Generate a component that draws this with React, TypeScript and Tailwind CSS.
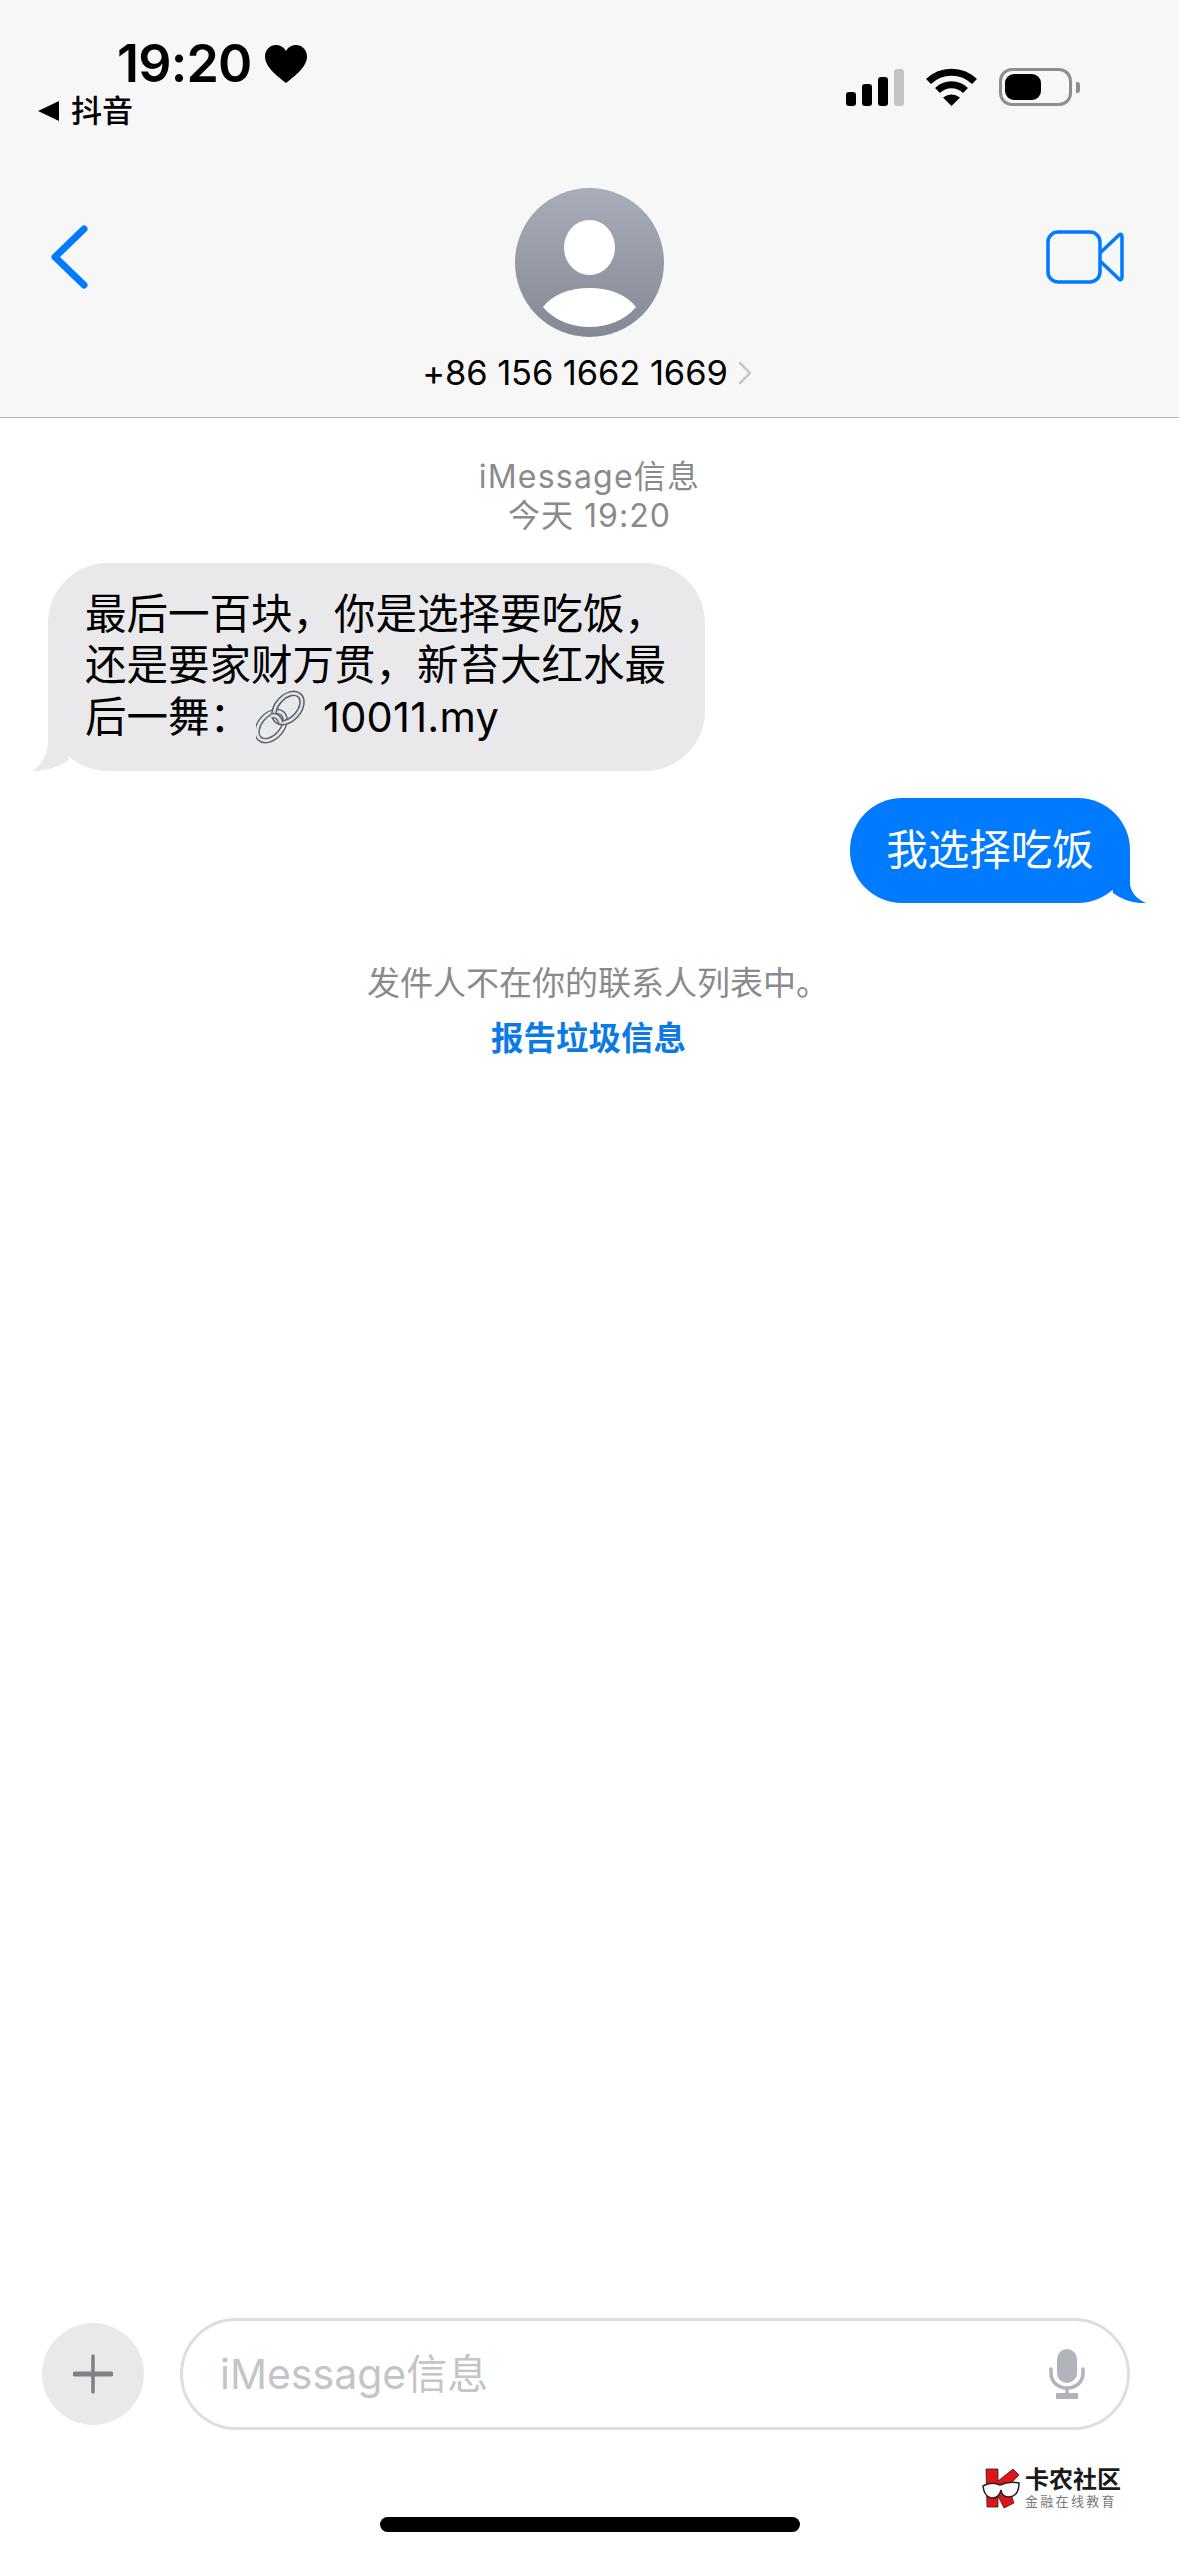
import React from "react";

function Heart() {
  return (
    <svg width="42" height="38" viewBox="0 0 42 38" className="shrink-0">
      <path d="M21 38C15 33 0 23 0 11.500C0 4.500 5.300 0 11 0C15.500 0 19 2.500 21 6C23 2.500 26.500 0 31 0C36.700 0 42 4.500 42 11.500C42 23 27 33 21 38Z" fill="#000" />
    </svg>
  );
}

function Wifi() {
  return (
    <svg width="51" height="38" viewBox="0 0 51 38" className="shrink-0">
      <path d="M2.500 13.500A33 33 0 0 1 48.500 13.500" fill="none" stroke="#000" strokeWidth="7" />
      <path d="M11.500 22.500A20 20 0 0 1 39.500 22.500" fill="none" stroke="#000" strokeWidth="7" />
      <path d="M25.500 38L17 29.500Q25.500 23.500 34 29.500Z" fill="#000" />
    </svg>
  );
}

function Avatar() {
  return (
    <svg width="149" height="149" viewBox="0 0 149 149" className="shrink-0">
      <defs>
        <linearGradient id="av" x1="0" y1="0" x2="0" y2="1">
          <stop offset="0" stopColor="#a9adb9" />
          <stop offset="1" stopColor="#858993" />
        </linearGradient>
      </defs>
      <circle cx="74.500" cy="74.500" r="74.500" fill="url(#av)" />
      <ellipse cx="74.500" cy="59.500" rx="25.500" ry="27.500" fill="#fff" />
      <path d="M28 119C37 107 54 100 74.500 100C95 100 112 107 121 119C109 133 92 139 74.500 139C57 139 40 133 28 119Z" fill="#fff" />
    </svg>
  );
}

function LinkIcon() {
  return (
    <svg width="50" height="54" viewBox="0 0 50 54" className="inline-block shrink-0">
      <g fill="none">
        <ellipse cx="15" cy="36" rx="17" ry="11" transform="rotate(-48 15 36)" stroke="#62676f" strokeWidth="5.500" />
        <ellipse cx="15" cy="36" rx="17" ry="11" transform="rotate(-48 15 36)" stroke="#e4e8ed" strokeWidth="2.600" />
        <ellipse cx="32" cy="18" rx="17" ry="11" transform="rotate(-48 32 18)" stroke="#5a5f67" strokeWidth="5.500" />
        <ellipse cx="32" cy="18" rx="17" ry="11" transform="rotate(-48 32 18)" stroke="#dde2e8" strokeWidth="2.600" />
        <path d="M15 26Q22 24 25 33" stroke="#62676f" strokeWidth="5.500" />
        <path d="M15 26Q22 24 25 33" stroke="#e4e8ed" strokeWidth="2.600" />
      </g>
    </svg>
  );
}

function LogoMark() {
  return (
    <svg width="38" height="42" viewBox="0 0 38 42" className="shrink-0">
      <path d="M4 2H16V14L31 2L37 8L26 19L32 36L22 41L16 29V40H5Z" fill="#e1141a" stroke="#222" strokeWidth="0.800" />
      <path d="M1 19Q9 14 18 18Q27 14 37 16Q37 29 27 30Q20 30 19 23Q17 32 9 31Q2 29 1 19Z" fill="#fff" stroke="#222" strokeWidth="1.500" />
    </svg>
  );
}

export default function App() {
  return (
    <div className="relative flex h-[2556px] w-[1179px] flex-col overflow-hidden bg-white font-['Inter','Noto_Sans_CJK_SC',sans-serif] text-black">
      <header className="flex h-[418px] shrink-0 flex-col border-b border-[#b5b5b5] bg-[#f7f7f7]">
        <div className="flex h-[146px] shrink-0 items-start justify-between">
          <div className="flex flex-col pl-[38px] pt-[35px]">
            <div className="flex h-[57px] items-center gap-[13px] pl-[79px]">
              <span className="text-[52px] leading-[57px] font-semibold tracking-[-0.800px]">19:20</span>
              <Heart />
            </div>
            <div className="flex h-[38px] items-center gap-[12px]">
              <span className="h-0 w-0 border-y-[10px] border-r-[21px] border-y-transparent border-r-black" />
              <span className="text-[31px] leading-[38px] font-medium">抖音</span>
            </div>
          </div>
          <div className="flex items-start pr-[99px] pt-[68px]">
            <div className="flex h-[38px] items-end gap-[6px]">
              <span className="h-[14px] w-[10px] rounded-[3px] bg-black" />
              <span className="h-[22px] w-[10px] rounded-[3px] bg-black" />
              <span className="h-[29px] w-[10px] rounded-[3px] bg-black" />
              <span className="h-[37px] w-[10px] rounded-[3px] bg-[#c4c4c4]" />
            </div>
            <div className="ml-[22px]"><Wifi /></div>
            <div className="ml-[22px] flex h-[38px] items-center">
              <div className="flex h-[38px] w-[73px] items-center rounded-[13px] border-[3px] border-[#8e8e8e] pl-[3px]">
                <span className="h-[26px] w-[36px] rounded-[9px] bg-black" />
              </div>
              <span className="ml-[4px] h-[11px] w-[4px] rounded-r-[3px] bg-[#8e8e8e]" />
            </div>
          </div>
        </div>
        <div className="flex items-start justify-between pl-[50px] pr-[55px]">
          <div className="flex w-[83px] shrink-0 justify-start">
            <svg width="38" height="64" viewBox="0 0 38 64" className="mt-[79px] shrink-0">
              <path d="M34 4L5 32L34 60" fill="none" stroke="#007aff" strokeWidth="7" strokeLinecap="round" strokeLinejoin="round" />
            </svg>
          </div>
          <div className="mt-[42px] flex flex-col items-center">
            <Avatar />
            <div className="mt-[15px] flex h-[42px] items-center gap-[10px] pr-[5px]">
              <span className="text-[34.500px] leading-[42px] tracking-[-0.100px]">+86 156 1662 1669</span>
              <svg width="14" height="24" viewBox="0 0 14 24" className="shrink-0">
                <path d="M2 2L12 12L2 22" fill="none" stroke="#c7c7cc" strokeWidth="2.500" strokeLinecap="round" strokeLinejoin="round" />
              </svg>
            </div>
          </div>
          <svg width="78" height="54" viewBox="0 0 78 54" className="mt-[84px] shrink-0">
            <rect x="2" y="2" width="52" height="50" rx="10" fill="none" stroke="#007aff" strokeWidth="3.500" />
            <path d="M54 23L73 5Q76 3 76 7V47Q76 51 73 49L54 31" fill="none" stroke="#007aff" strokeWidth="3.500" strokeLinejoin="round" />
          </svg>
        </div>
      </header>

      <main className="flex flex-1 flex-col">
        <div className="mt-[39px] flex flex-col items-center text-[32px] leading-[39px] text-[#8a8a8e]">
          <span className="tracking-[1.200px]">iMessage信息</span>
          <span className="tracking-[1px]">今天 19:20</span>
        </div>

        <div className="mt-[28px] flex pl-[48px]">
          <div className="relative h-[208px] w-[657px] rounded-[60px] bg-[#e9e9eb] pl-[37px] pt-[26px] text-[41.500px] leading-[51px] whitespace-nowrap">
            <div>最后一百块，你是选择要吃饭，</div>
            <div>还是要家财万贯，新苔大红水最</div>
            <div className="flex h-[52px] items-center">
              <span>后一舞：</span>
              <span className="ml-[5px] mr-[17px] flex"><LinkIcon /></span>
              <span className="tracking-[0.250px]">10011.my</span>
            </div>
            <svg width="40" height="60" viewBox="0 0 40 60" className="absolute bottom-0 left-[-16px]">
              <path d="M16 0V30C16 45 8 55 0 60Q20 60 36 50L40 0Z" fill="#e9e9eb" />
            </svg>
          </div>
        </div>

        <div className="mt-[27px] flex justify-end pr-[49px]">
          <div className="relative flex h-[105px] w-[280px] items-center justify-center rounded-[52px] bg-[#007aff] text-[41.500px] text-white">
            <span>我选择吃饭</span>
            <svg width="38" height="50" viewBox="0 0 38 50" className="absolute bottom-0 right-[-16px]">
              <path d="M22 0V30C22 38 28 46 38 50Q20 51 5 40L0 0Z" fill="#007aff" />
            </svg>
          </div>
        </div>

        <div className="mt-[60px] flex flex-col items-center pr-[2px]">
          <span className="pl-[19px] text-[33px] leading-[40px] text-[#8a8a8e]">发件人不在你的联系人列表中。</span>
          <span className="mt-[16px] text-[32.500px] leading-[40px] font-semibold text-[#0a7ae6]">报告垃圾信息</span>
        </div>
      </main>

      <footer className="flex shrink-0 flex-col">
        <div className="flex items-center pl-[42px] pr-[49px]">
          <div className="flex h-[102px] w-[102px] shrink-0 items-center justify-center rounded-full bg-[#e9e9eb]">
            <svg width="40" height="40" viewBox="0 0 40 40">
              <path d="M20 2V38" stroke="#7f7f85" strokeWidth="3.500" strokeLinecap="round" />
              <path d="M2 20H38" stroke="#7f7f85" strokeWidth="5" strokeLinecap="round" />
            </svg>
          </div>
          <div className="ml-[36px] flex h-[112px] flex-1 items-center justify-between rounded-[56px] border-[3px] border-[#dedede] pl-[37px] pr-[42px]">
            <span className="text-[41px] leading-[50px] text-[#c5c5c7]">iMessage信息</span>
            <svg width="36" height="50" viewBox="0 0 36 50" className="shrink-0">
              <rect x="8" y="0" width="20" height="34" rx="10" fill="#b1b4ba" />
              <path d="M2 20V24C2 33 9 39 18 39C27 39 34 33 34 24V20" fill="none" stroke="#b1b4ba" strokeWidth="3.500" strokeLinecap="round" />
              <path d="M18 39V45" stroke="#b1b4ba" strokeWidth="3.500" />
              <rect x="7" y="44" width="22" height="6" rx="1" fill="#b1b4ba" />
            </svg>
          </div>
        </div>
        <div className="flex h-[126px] flex-col items-center justify-end pb-[24px]">
          <div className="h-[15px] w-[420px] rounded-full bg-black" />
        </div>
      </footer>

      <div className="absolute left-[982px] top-[2467px] flex items-center gap-[5px]">
        <LogoMark />
        <div className="flex flex-col">
          <span className="text-[24px] leading-[26px] font-bold text-[#1a1a1a]">卡农社区</span>
          <span className="text-[13px] leading-[16px] tracking-[2.300px] text-[#777]">金融在线教育</span>
        </div>
      </div>
    </div>
  );
}
